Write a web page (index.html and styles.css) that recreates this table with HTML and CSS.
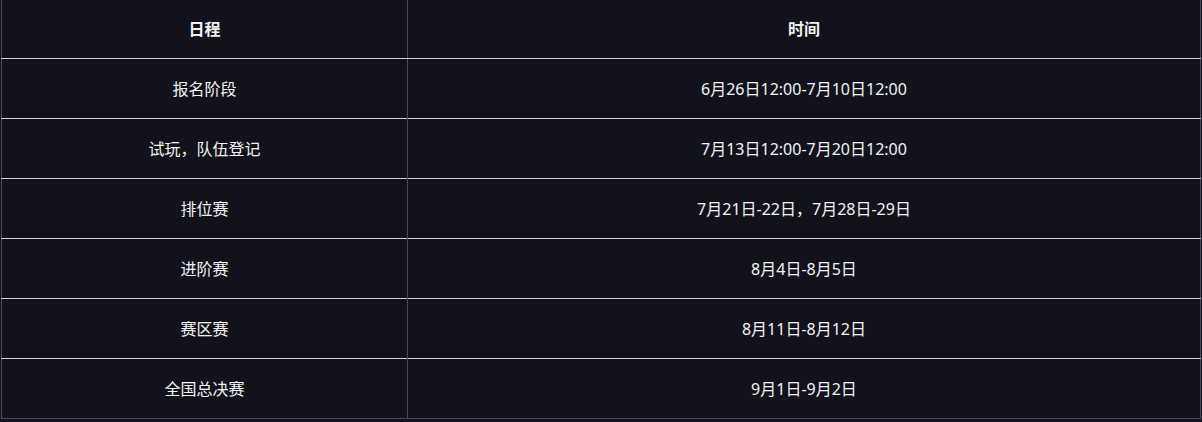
FILE: index.html
```html
<!DOCTYPE html>
<html lang="zh-CN">
<head>
  <meta charset="UTF-8">
  <title>赛程安排</title>
  <link rel="stylesheet" href="styles.css">
</head>
<body>
  <div id="container">
    <table class="schedule">
      <thead>
        <tr>
          <th class="col-stage">日程</th>
          <th>时间</th>
        </tr>
      </thead>
      <tbody>
        <tr><td>报名阶段</td><td>6月26日12:00-7月10日12:00</td></tr>
        <tr><td>试玩，队伍登记</td><td>7月13日12:00-7月20日12:00</td></tr>
        <tr><td>排位赛</td><td>7月21日-22日，7月28日-29日</td></tr>
        <tr><td>进阶赛</td><td>8月4日-8月5日</td></tr>
        <tr><td>赛区赛</td><td>8月11日-8月12日</td></tr>
        <tr><td>全国总决赛</td><td>9月1日-9月2日</td></tr>
      </tbody>
    </table>
  </div>
</body>
</html>
```

FILE: styles.css
```css
body {
    background-color: #13131e;
    font-family: "Noto Sans", "Noto Sans CJK SC", sans-serif;
    margin: 0;
  }

  #container {
    padding-left: 1px;
  }

  .schedule {
    width: 1200px;
    border-collapse: collapse;
    background-color: #12121d;
    border-left: 1px solid #4a4a5c;
    border-right: 1px solid #4a4a5c;
    border-bottom: 1px solid #4a4a5c;
    color: #f2f2f2;
    font-size: 16px;
  }

  .schedule th,
  .schedule td {
    text-align: center;
    padding: 0;
    line-height: 20px;
  }

  .schedule th {
    height: 58px;
    font-weight: bold;
    border-bottom: 1px solid #cfcfd6;
  }

  .schedule td {
    height: 59px;
    border-top: 1px solid #cfcfd6;
  }

  .schedule tbody tr:first-child td {
    border-top: none;
  }

  .schedule th + th,
  .schedule td + td {
    border-left: 1px solid #4a4a5c;
  }

  .col-stage {
    width: 405px;
  }
```
